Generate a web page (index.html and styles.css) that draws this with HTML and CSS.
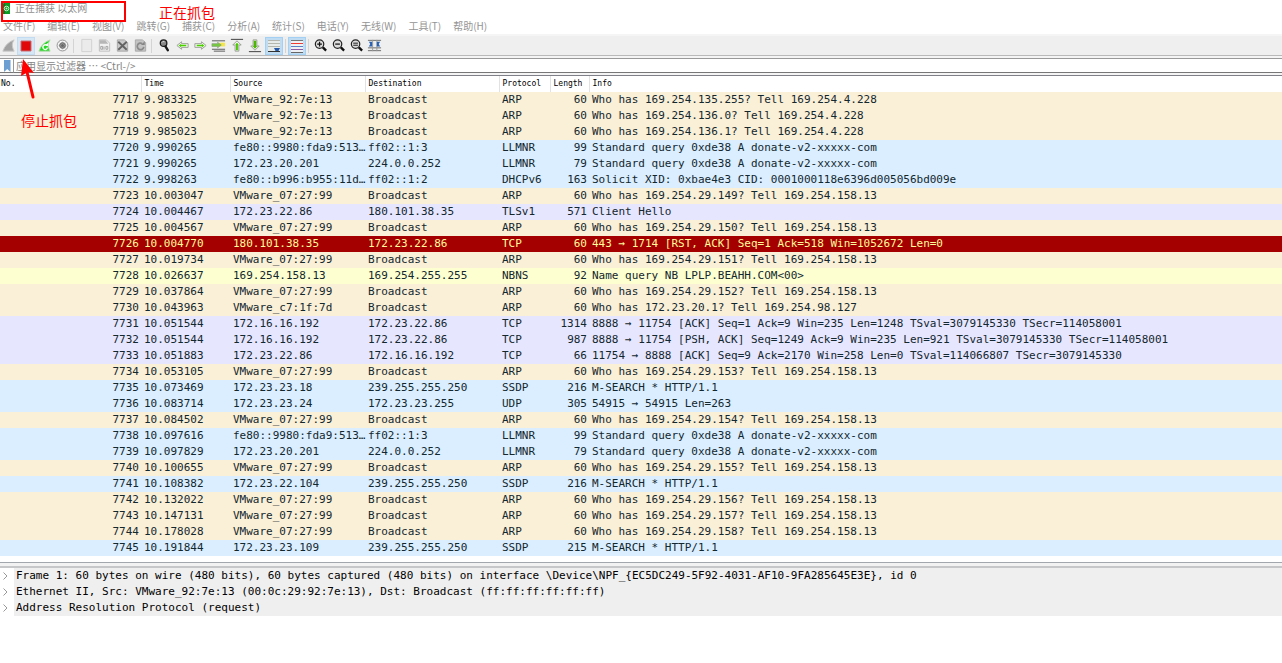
FILE: index.html
```html
<!DOCTYPE html>
<html lang="zh-CN">
<head>
<meta charset="utf-8">
<title>正在捕获 以太网</title>
<link rel="stylesheet" href="styles.css">
</head>
<body>
<header class="titlebar">
  <svg class="app-icon" width="10" height="12" viewBox="0 0 10 12" aria-hidden="true"><path d="M0 2 9 0V12H0Z" fill="#0b9b22"/><path d="M0 2 4 1V12H0Z" fill="#14732a"/><circle cx="5.500" cy="6.500" r="2.300" fill="none" stroke="#c9f0c6" stroke-width="1"/><circle cx="5.500" cy="6.500" r="1" fill="#c9f0c6"/></svg>
  <h1 class="title">正在捕获 以太网</h1>
</header>
<nav class="menubar" aria-label="主菜单">
  <button class="menu">文件(F)</button><button class="menu">编辑(E)</button><button class="menu">视图(V)</button><button class="menu">跳转(G)</button><button class="menu">捕获(C)</button><button class="menu">分析(A)</button><button class="menu">统计(S)</button><button class="menu">电话(Y)</button><button class="menu">无线(W)</button><button class="menu">工具(T)</button><button class="menu">帮助(H)</button>
</nav>
<div class="toolbar" role="toolbar" aria-label="工具栏">
  <div class="group first">
    <button class="tool" aria-label="开始捕获"><svg viewBox="0 0 16 16"><path d="M2 14C4 8 8 4 14 2C11 6 12 10 14 14Z" fill="#a2a2a2" stroke="#c8c8c8"/></svg></button>
    <button class="tool stop" aria-label="停止捕获"><svg viewBox="0 0 16 16"><path d="M3 3H13V13H3Z" fill="#e00808" stroke="#c86a70"/></svg></button>
    <button class="tool" aria-label="重新开始捕获"><svg viewBox="0 0 16 16"><path d="M2 14C4 8 8 4 14 2C11 6 12 10 14 14Z" fill="#22d822" stroke="#b9d8b2"/><path d="M11 8C8 6 5 9 7 11.500C9 13 11 12 11 10" fill="none" stroke="#f4fff2" stroke-width="1.500"/><path d="M12 5V9L8.500 7.500Z" fill="#f4fff2"/></svg></button>
    <button class="tool" aria-label="捕获选项"><svg viewBox="0 0 16 16"><circle cx="8" cy="8" r="5.800" fill="#f4f4f4" stroke="#8f8f8f"/><circle cx="8" cy="8" r="2.800" fill="none" stroke="#666" stroke-width="1.400"/><path d="M8 4V12M4 8H12M5.200 5.200 10.800 10.800M10.800 5.200 5.200 10.800" stroke="#888" stroke-width=".8"/><circle cx="8" cy="8" r="1.600" fill="#666"/></svg></button>
  </div>
  <span class="sep"></span>
  <div class="group">
    <button class="tool" aria-label="打开"><svg viewBox="0 0 16 16"><path d="M3 1.500H13.500V14.500H3Z" fill="#ebebeb" stroke="#d0d0d0"/></svg></button>
    <button class="tool" aria-label="保存"><svg viewBox="0 0 16 16"><path d="M2.500 2H10L13.500 5.500V14H2.500Z" fill="#f1f1f1" stroke="#bcbcbc"/><path d="M3 2.500H9L12 6H3Z" fill="#b6b6b6"/><path d="M4 9H6V12H4ZM7.500 9V12.500M9.500 9H11.500V12H9.500Z" fill="none" stroke="#a0a0a0"/></svg></button>
    <button class="tool" aria-label="关闭"><svg viewBox="0 0 16 16"><path d="M2.500 2H10L13.500 5V14H2.500Z" fill="#c9c9c9" stroke="#a5a5a5"/><path d="M3.500 4 12.500 12.500M12.500 4 3.500 12.500" stroke="#626262" stroke-width="2"/></svg></button>
    <button class="tool" aria-label="重新加载"><svg viewBox="0 0 16 16"><path d="M2.500 2H10L13.500 5V14H2.500Z" fill="#c4c4c4" stroke="#a9a9a9"/><path d="M11.500 9.500A3.500 3.500 0 1 1 10 6" fill="none" stroke="#8a8a8a" stroke-width="1.800"/><path d="M8.500 7.500H12.500V3.500Z" fill="#858585"/></svg></button>
  </div>
  <span class="sep"></span>
  <div class="group">
    <button class="tool" aria-label="查找"><svg viewBox="0 0 16 16"><circle cx="7" cy="5.500" r="3.500" fill="#888" stroke="#1c1c1c" stroke-width="1.400"/><path d="M5 5Q6 3 8 4" fill="none" stroke="#ddd"/><path d="M9 9 11.500 13" stroke="#191919" stroke-width="2.600" stroke-linecap="round"/></svg></button>
    <button class="tool" aria-label="后退"><svg viewBox="0 0 16 16"><path d="M2 8 7 4V6H14V10H7V12Z" fill="#f3f8ee" stroke="#9a9d96"/><path d="M4 8 6.500 6.200V7.300H12V8.800H6.500V10Z" fill="#4bd000"/></svg></button>
    <button class="tool" aria-label="前进"><svg viewBox="0 0 16 16"><path d="M14 8 9 4V6H2V10H9V12Z" fill="#f3f8ee" stroke="#9a9d96"/><path d="M12 8 9.500 6.200V7.300H4V8.800H9.500V10Z" fill="#4bd000"/></svg></button>
    <button class="tool" aria-label="转到分组"><svg viewBox="0 0 16 16"><path d="M1 3H15M1 12H15M3 14H15" stroke="#555"/><path d="M9 5H15V9H9Z" fill="#f4e64b"/><path d="M1 6H7V4.500L11 7.500 7 10.500V9H1Z" fill="#75c93f" stroke="#8a9980" stroke-width=".7"/></svg></button>
    <button class="tool" aria-label="首个分组"><svg viewBox="0 0 16 16"><path d="M2 1.500H15" stroke="#555" stroke-width="1.200"/><path d="M8.500 3 13 7.500H10.500V14H6.500V7.500H4Z" fill="#f4faef" stroke="#969b92"/><path d="M8.500 5 10.500 7.200H9.500V13H7.500V7.200H6.500Z" fill="#4bc800"/></svg></button>
    <button class="tool" aria-label="最新分组"><svg viewBox="0 0 16 16"><path d="M2 14.500H15" stroke="#555" stroke-width="1.200"/><path d="M8.500 13 13 8.500H10.500V2H6.500V8.500H4Z" fill="#f4faef" stroke="#969b92"/><path d="M8.500 11.500 11 8.500H9.800V3H7.200V8.500H6Z" fill="#4bb800"/></svg></button>
  </div>
  <div class="group">
    <button class="tool on" aria-label="自动滚动"><svg viewBox="0 0 16 16"><path d="M2 2H14V13H2Z" fill="#e6ecea"/><path d="M2 2.500H14M2 5.500H14M2 8.500H14" stroke="#b3b7ae"/><path d="M2 13.500H14" stroke="#333"/><path d="M8 10H14L12.500 13H9.500Z" fill="#2459a8"/></svg></button>
  </div>
  <span class="sep tight"></span>
  <div class="group">
    <button class="tool on" aria-label="着色分组列表"><svg viewBox="0 0 16 16"><path d="M2 2H14V14H2Z" fill="#eef0f4"/><path d="M2 2.500H14" stroke="#777"/><path d="M2 5.500H14" stroke="#ef3b30"/><path d="M2 8.500H14" stroke="#5a80c6"/><path d="M2 11.500H14" stroke="#8c5da4"/><path d="M2 14.500H14" stroke="#666"/></svg></button>
  </div>
  <span class="sep tight"></span>
  <div class="group">
    <button class="tool" aria-label="放大"><svg viewBox="0 0 16 16"><circle cx="7" cy="6.500" r="4.500" fill="#ddd" stroke="#222" stroke-width="1.300"/><path d="M4.500 6.500H9.500M7 4V9" stroke="#111" stroke-width="1.300"/><path d="M10.500 10 14 13.500" stroke="#111" stroke-width="2.500"/></svg></button>
    <button class="tool" aria-label="缩小"><svg viewBox="0 0 16 16"><circle cx="7" cy="6.500" r="4.500" fill="#ddd" stroke="#222" stroke-width="1.300"/><path d="M4.500 6.500H9.500" stroke="#111" stroke-width="1.300"/><path d="M10.500 10 14 13.500" stroke="#111" stroke-width="2.500"/></svg></button>
    <button class="tool" aria-label="正常大小"><svg viewBox="0 0 16 16"><circle cx="7" cy="6.500" r="4.500" fill="#ddd" stroke="#222" stroke-width="1.300"/><path d="M4.500 5.500H9.500M4.500 7.700H9.500" stroke="#111"/><path d="M10.500 10 14 13.500" stroke="#111" stroke-width="2.500"/></svg></button>
    <button class="tool" aria-label="调整列宽"><svg viewBox="0 0 16 16"><path d="M2 2.500H14V13.500H2Z" fill="#eee"/><path d="M1 2.500H15M1 13.500H15M1 10.500H15" stroke="#666"/><path d="M6 2V14M10.500 2V14" stroke="#999"/><path d="M2 4H5.500V9H2L3.500 6.500ZM14 4H10.500V9H14L12.500 6.500Z" fill="#2860b5"/></svg></button>
  </div>
</div>
<div class="filterbar">
  <button class="bookmark" aria-label="书签"><svg width="8" height="12" viewBox="0 0 8 12"><path d="M1 0H7.500V12L4.200 9 1 12Z" fill="#6d9fd2"/></svg></button>
  <input class="filter" type="text" aria-label="显示过滤器" placeholder="应用显示过滤器 ⋯ &lt;Ctrl-/&gt;">
</div>
<main class="panes">
<table class="packets">
<colgroup><col class="c-no"><col class="c-time"><col class="c-src"><col class="c-dst"><col class="c-proto"><col class="c-len"><col></colgroup>
<thead><tr><th>No.</th><th>Time</th><th>Source</th><th>Destination</th><th>Protocol</th><th>Length</th><th>Info</th></tr></thead>
<tbody>
<tr class="arp"><td>7717</td><td>9.983325</td><td>VMware_92:7e:13</td><td>Broadcast</td><td>ARP</td><td>60</td><td>Who has 169.254.135.255? Tell 169.254.4.228</td></tr>
<tr class="arp"><td>7718</td><td>9.985023</td><td>VMware_92:7e:13</td><td>Broadcast</td><td>ARP</td><td>60</td><td>Who has 169.254.136.0? Tell 169.254.4.228</td></tr>
<tr class="arp"><td>7719</td><td>9.985023</td><td>VMware_92:7e:13</td><td>Broadcast</td><td>ARP</td><td>60</td><td>Who has 169.254.136.1? Tell 169.254.4.228</td></tr>
<tr class="udp"><td>7720</td><td>9.990265</td><td>fe80::9980:fda9:513…</td><td>ff02::1:3</td><td>LLMNR</td><td>99</td><td>Standard query 0xde38 A donate-v2-xxxxx-com</td></tr>
<tr class="udp"><td>7721</td><td>9.990265</td><td>172.23.20.201</td><td>224.0.0.252</td><td>LLMNR</td><td>79</td><td>Standard query 0xde38 A donate-v2-xxxxx-com</td></tr>
<tr class="udp"><td>7722</td><td>9.998263</td><td>fe80::b996:b955:11d…</td><td>ff02::1:2</td><td>DHCPv6</td><td>163</td><td>Solicit XID: 0xbae4e3 CID: 0001000118e6396d005056bd009e</td></tr>
<tr class="arp"><td>7723</td><td>10.003047</td><td>VMware_07:27:99</td><td>Broadcast</td><td>ARP</td><td>60</td><td>Who has 169.254.29.149? Tell 169.254.158.13</td></tr>
<tr class="tcp"><td>7724</td><td>10.004467</td><td>172.23.22.86</td><td>180.101.38.35</td><td>TLSv1</td><td>571</td><td>Client Hello</td></tr>
<tr class="arp"><td>7725</td><td>10.004567</td><td>VMware_07:27:99</td><td>Broadcast</td><td>ARP</td><td>60</td><td>Who has 169.254.29.150? Tell 169.254.158.13</td></tr>
<tr class="rst"><td>7726</td><td>10.004770</td><td>180.101.38.35</td><td>172.23.22.86</td><td>TCP</td><td>60</td><td>443 → 1714 [RST, ACK] Seq=1 Ack=518 Win=1052672 Len=0</td></tr>
<tr class="arp"><td>7727</td><td>10.019734</td><td>VMware_07:27:99</td><td>Broadcast</td><td>ARP</td><td>60</td><td>Who has 169.254.29.151? Tell 169.254.158.13</td></tr>
<tr class="nbns"><td>7728</td><td>10.026637</td><td>169.254.158.13</td><td>169.254.255.255</td><td>NBNS</td><td>92</td><td>Name query NB LPLP.BEAHH.COM&lt;00&gt;</td></tr>
<tr class="arp"><td>7729</td><td>10.037864</td><td>VMware_07:27:99</td><td>Broadcast</td><td>ARP</td><td>60</td><td>Who has 169.254.29.152? Tell 169.254.158.13</td></tr>
<tr class="arp"><td>7730</td><td>10.043963</td><td>VMware_c7:1f:7d</td><td>Broadcast</td><td>ARP</td><td>60</td><td>Who has 172.23.20.1? Tell 169.254.98.127</td></tr>
<tr class="tcp"><td>7731</td><td>10.051544</td><td>172.16.16.192</td><td>172.23.22.86</td><td>TCP</td><td>1314</td><td>8888 → 11754 [ACK] Seq=1 Ack=9 Win=235 Len=1248 TSval=3079145330 TSecr=114058001</td></tr>
<tr class="tcp"><td>7732</td><td>10.051544</td><td>172.16.16.192</td><td>172.23.22.86</td><td>TCP</td><td>987</td><td>8888 → 11754 [PSH, ACK] Seq=1249 Ack=9 Win=235 Len=921 TSval=3079145330 TSecr=114058001</td></tr>
<tr class="tcp"><td>7733</td><td>10.051883</td><td>172.23.22.86</td><td>172.16.16.192</td><td>TCP</td><td>66</td><td>11754 → 8888 [ACK] Seq=9 Ack=2170 Win=258 Len=0 TSval=114066807 TSecr=3079145330</td></tr>
<tr class="arp"><td>7734</td><td>10.053105</td><td>VMware_07:27:99</td><td>Broadcast</td><td>ARP</td><td>60</td><td>Who has 169.254.29.153? Tell 169.254.158.13</td></tr>
<tr class="udp"><td>7735</td><td>10.073469</td><td>172.23.23.18</td><td>239.255.255.250</td><td>SSDP</td><td>216</td><td>M-SEARCH * HTTP/1.1</td></tr>
<tr class="udp"><td>7736</td><td>10.083714</td><td>172.23.23.24</td><td>172.23.23.255</td><td>UDP</td><td>305</td><td>54915 → 54915 Len=263</td></tr>
<tr class="arp"><td>7737</td><td>10.084502</td><td>VMware_07:27:99</td><td>Broadcast</td><td>ARP</td><td>60</td><td>Who has 169.254.29.154? Tell 169.254.158.13</td></tr>
<tr class="udp"><td>7738</td><td>10.097616</td><td>fe80::9980:fda9:513…</td><td>ff02::1:3</td><td>LLMNR</td><td>99</td><td>Standard query 0xde38 A donate-v2-xxxxx-com</td></tr>
<tr class="udp"><td>7739</td><td>10.097829</td><td>172.23.20.201</td><td>224.0.0.252</td><td>LLMNR</td><td>79</td><td>Standard query 0xde38 A donate-v2-xxxxx-com</td></tr>
<tr class="arp"><td>7740</td><td>10.100655</td><td>VMware_07:27:99</td><td>Broadcast</td><td>ARP</td><td>60</td><td>Who has 169.254.29.155? Tell 169.254.158.13</td></tr>
<tr class="udp"><td>7741</td><td>10.108382</td><td>172.23.22.104</td><td>239.255.255.250</td><td>SSDP</td><td>216</td><td>M-SEARCH * HTTP/1.1</td></tr>
<tr class="arp"><td>7742</td><td>10.132022</td><td>VMware_07:27:99</td><td>Broadcast</td><td>ARP</td><td>60</td><td>Who has 169.254.29.156? Tell 169.254.158.13</td></tr>
<tr class="arp"><td>7743</td><td>10.147131</td><td>VMware_07:27:99</td><td>Broadcast</td><td>ARP</td><td>60</td><td>Who has 169.254.29.157? Tell 169.254.158.13</td></tr>
<tr class="arp"><td>7744</td><td>10.178028</td><td>VMware_07:27:99</td><td>Broadcast</td><td>ARP</td><td>60</td><td>Who has 169.254.29.158? Tell 169.254.158.13</td></tr>
<tr class="udp"><td>7745</td><td>10.191844</td><td>172.23.23.109</td><td>239.255.255.250</td><td>SSDP</td><td>215</td><td>M-SEARCH * HTTP/1.1</td></tr>
</tbody>
</table>
<div class="splitter"></div>
<section class="tree" aria-label="分组详情">
  <details><summary><svg class="chev" viewBox="0 0 14 16"><path d="M3.500 4.500 7 8 3.500 11.500"/></svg><span class="node">Frame 1: 60 bytes on wire (480 bits), 60 bytes captured (480 bits) on interface \Device\NPF_{EC5DC249-5F92-4031-AF10-9FA285645E3E}, id 0</span></summary></details>
  <details><summary><svg class="chev" viewBox="0 0 14 16"><path d="M3.500 4.500 7 8 3.500 11.500"/></svg><span class="node">Ethernet II, Src: VMware_92:7e:13 (00:0c:29:92:7e:13), Dst: Broadcast (ff:ff:ff:ff:ff:ff)</span></summary></details>
  <details><summary><svg class="chev" viewBox="0 0 14 16"><path d="M3.500 4.500 7 8 3.500 11.500"/></svg><span class="node">Address Resolution Protocol (request)</span></summary></details>
</section>
</main>
<div class="mark-box"></div>
<p class="mark mark-capturing">正在抓包</p>
<svg class="mark-arrow" width="20" height="44" viewBox="0 0 20 44" aria-hidden="true"><path d="M13 40 7 15" stroke="#fe0000" stroke-width="3" stroke-linecap="round"/><path d="M3 2 14 16 8 15 1 19Z" fill="#fe0000"/></svg>
<p class="mark mark-stop">停止抓包</p>
</body>
</html>
```

FILE: styles.css
```css
* { box-sizing: border-box; }
body {
  position: relative;
  margin: 0;
  min-height: 100vh;
  background: #fff;
  color: #12272e;
  font: 10px/16px "Noto Sans CJK SC", sans-serif;
}
button { padding: 0; border: 0; background: none; color: inherit; font: inherit; }

.titlebar { display: flex; align-items: center; gap: 4px; height: 15px; padding-left: 1px; }
.title { margin: 0; color: #8f8f8f; font-size: 10px; font-weight: 400; line-height: 15px; }
.menubar { display: flex; gap: 12px; height: 21px; padding: 2px 0 0 3px; border-bottom: 2px solid #f5f5f5; color: #949494; }
.menu { line-height: 17px; white-space: nowrap; }

.toolbar { display: flex; align-items: center; height: 20px; background: #efefef; border-bottom: 1px solid #b9b9b9; }
.group { display: flex; }
.group.first { margin-left: -1px; }
.tool { display: grid; place-items: center; width: 18px; height: 18px; }
.tool svg { width: 15px; height: 15px; }
.tool.on { background: #c0dcf3; border: 1px solid #a4d0f3; }
.tool.stop { background: #d5e6f5; border: 1px solid #c3dcf2; }
.tool.on svg, .tool.stop svg { width: 16px; height: 16px; }
.sep { width: 1px; height: 14px; margin: 0 3px 0 2px; background: #d4d4d4; }
.group + .group { margin-left: 2px; }
.sep.tight { margin: 0 2px; }

.filterbar { display: flex; height: 20px; padding: 2px 0 2px; border-bottom: 1px solid #808088; background: #f4f4f4; }
.bookmark { display: grid; place-items: center; width: 13px; background: #fff; border-top: 1px solid #999; border-bottom: 1px solid #777; }
.bookmark svg { display: block; }
.filter {
  flex: 1; min-width: 0; padding: 0 2px; border: 1px solid #999; border-right: 0; border-bottom-color: #777;
  background: #fff; color: #333; font: 10px/13px "Noto Sans CJK SC", sans-serif; outline: 0;
}
.filter::placeholder { color: #858585; opacity: 1; }

.packets { width: 100%; border-collapse: collapse; table-layout: fixed; font: 11px/16px "DejaVu Sans Mono", monospace; }
.c-no { width: 141px; }
.c-time { width: 89px; }
.c-src { width: 135px; }
.c-dst { width: 134px; }
.c-proto { width: 51px; }
.c-len { width: 39px; }
.packets th {
  height: 16px; padding: 0 0 0 3px; border-left: 1px solid #e2e2e2;
  color: #000; font: 8px/16px "DejaVu Sans Mono", monospace; text-align: left; white-space: nowrap;
}
.packets th:first-child { padding-left: 1px; border-left: 0; }
.packets td { height: 16px; padding: 0 2px 0 3px; white-space: nowrap; }
.packets td:nth-child(1), .packets td:nth-child(6) { text-align: right; }
.arp { background: #faefd7; }
.udp { background: #daeeff; }
.tcp { background: #e7e6ff; }
.nbns { background: #feffd0; }
.rst { background: #a40000; color: #fffc9c; }

.splitter { height: 6px; margin-top: 6px; border-top: 1px solid #a2a7ad; border-bottom: 2px solid #c5c7c9; background: #f2f2f2; }
.tree { color: #000; font: 11px/16px "DejaVu Sans Mono", monospace; }
.tree summary { display: flex; list-style: none; }
.chev { flex: none; width: 14px; height: 16px; fill: none; stroke: #999; }
.node { flex: 1; padding-left: 2px; background: #efefef; white-space: nowrap; }

.mark { position: absolute; margin: 0; color: #fe0000; font-size: 14px; line-height: 16px; white-space: nowrap; }
.mark-capturing { left: 159px; top: 4px; }
.mark-stop { left: 21px; top: 112px; }
.mark-box { position: absolute; left: 1px; top: 1px; width: 125px; height: 21px; border: 2px solid #fe0000; pointer-events: none; }
.mark-arrow { position: absolute; left: 20px; top: 57px; pointer-events: none; }
```
